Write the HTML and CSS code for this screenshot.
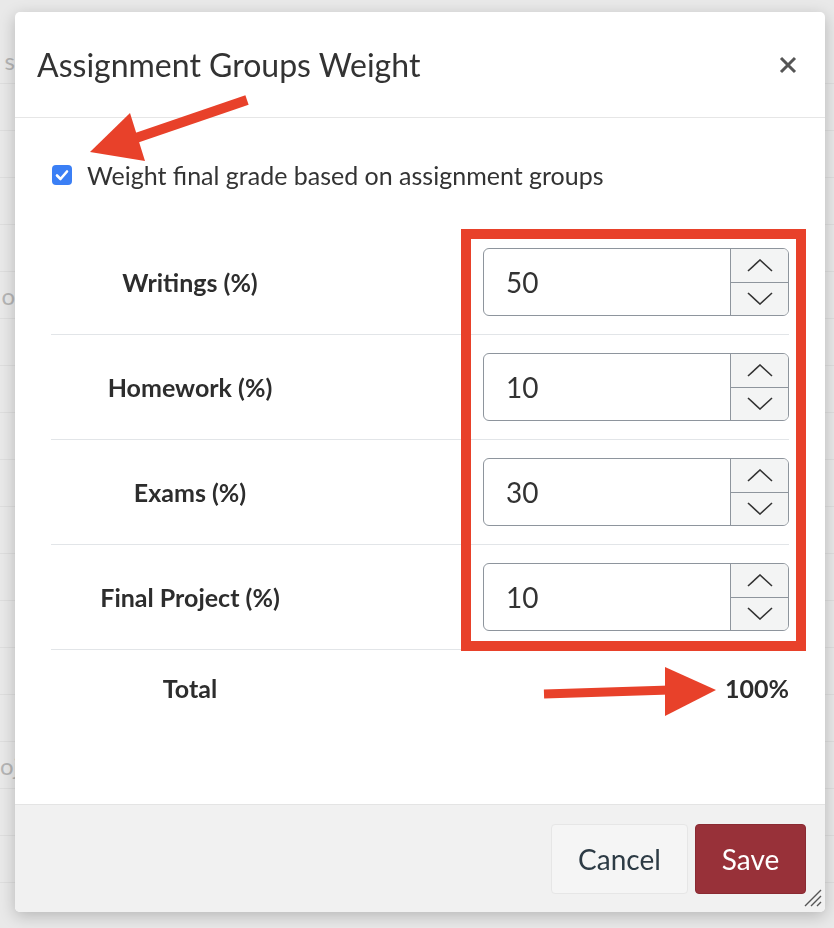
FILE: index.html
```html
<!DOCTYPE html>
<html lang="en">
<head>
  <meta charset="UTF-8">
  <meta name="viewport" content="width=device-width, initial-scale=1.0">
  <title>Assignment Groups Weight</title>
  <link rel="stylesheet" href="styles.css">
</head>
<body>
  <div class="page">
    <div class="line"><span class="l">s</span></div>
    <div class="line"></div>
    <div class="line"></div>
    <div class="line"></div>
    <div class="line"></div>
    <div class="line"><span class="l">o</span></div>
    <div class="line"></div>
    <div class="line"></div>
    <div class="line"></div>
    <div class="line"></div>
    <div class="line"></div>
    <div class="line"></div>
    <div class="line"></div>
    <div class="line"></div>
    <div class="line"></div>
    <div class="line"><span class="l">oj</span></div>
    <div class="line"></div>
    <div class="line"></div>
    <div class="line"></div>
  </div>

  <div class="modal">
    <header class="modal-head">
      <h2>Assignment Groups Weight</h2>
      <button class="close" aria-label="Close">
        <svg width="18" height="18" viewBox="0 0 18 18"><path d="M2 2 L16 16 M16 2 L2 16" stroke="#555" stroke-width="3"/></svg>
      </button>
    </header>

    <div class="modal-body">
      <label class="check">
        <span class="box">
          <svg width="20" height="20" viewBox="0 0 20 20"><path d="M5 10.5 L8.5 14 L15 6.5" fill="none" stroke="#fff" stroke-width="2.6" stroke-linecap="round" stroke-linejoin="round"/></svg>
        </span>
        Weight final grade based on assignment groups
      </label>

      <div class="groups">
        <div class="group">
          <span class="name">Writings (%)</span>
          <div class="num">
            <span class="val">50</span>
            <div class="spin">
              <button><svg width="26" height="13" viewBox="0 0 26 13"><polyline points="1,12 13,1 25,12" fill="none" stroke="#333" stroke-width="1.6"/></svg></button>
              <button><svg width="26" height="13" viewBox="0 0 26 13"><polyline points="1,1 13,12 25,1" fill="none" stroke="#333" stroke-width="1.6"/></svg></button>
            </div>
          </div>
        </div>
        <div class="group">
          <span class="name">Homework (%)</span>
          <div class="num">
            <span class="val">10</span>
            <div class="spin">
              <button><svg width="26" height="13" viewBox="0 0 26 13"><polyline points="1,12 13,1 25,12" fill="none" stroke="#333" stroke-width="1.6"/></svg></button>
              <button><svg width="26" height="13" viewBox="0 0 26 13"><polyline points="1,1 13,12 25,1" fill="none" stroke="#333" stroke-width="1.6"/></svg></button>
            </div>
          </div>
        </div>
        <div class="group">
          <span class="name">Exams (%)</span>
          <div class="num">
            <span class="val">30</span>
            <div class="spin">
              <button><svg width="26" height="13" viewBox="0 0 26 13"><polyline points="1,12 13,1 25,12" fill="none" stroke="#333" stroke-width="1.6"/></svg></button>
              <button><svg width="26" height="13" viewBox="0 0 26 13"><polyline points="1,1 13,12 25,1" fill="none" stroke="#333" stroke-width="1.6"/></svg></button>
            </div>
          </div>
        </div>
        <div class="group">
          <span class="name">Final Project (%)</span>
          <div class="num">
            <span class="val">10</span>
            <div class="spin">
              <button><svg width="26" height="13" viewBox="0 0 26 13"><polyline points="1,12 13,1 25,12" fill="none" stroke="#333" stroke-width="1.6"/></svg></button>
              <button><svg width="26" height="13" viewBox="0 0 26 13"><polyline points="1,1 13,12 25,1" fill="none" stroke="#333" stroke-width="1.6"/></svg></button>
            </div>
          </div>
        </div>
        <div class="group total">
          <span class="name">Total</span>
          <span class="sum">100%</span>
        </div>
      </div>
    </div>

    <footer class="modal-foot">
      <button class="btn btn-cancel">Cancel</button>
      <button class="btn btn-save">Save</button>
    </footer>
    <svg class="grip" width="20" height="20" viewBox="0 0 20 20">
      <path d="M19 3 L3 19 M19 9 L9 19 M19 15 L15 19" stroke="#555" stroke-width="1.4"/>
    </svg>
  </div>

  <svg class="marks" width="834" height="928" viewBox="0 0 834 928">
    <rect x="466" y="234" width="335" height="412" fill="none" stroke="#e8412a" stroke-width="10"/>
    <line x1="136" y1="138" x2="247" y2="100" stroke="#e8412a" stroke-width="10"/>
    <polygon points="90,152 130,113 145,161" fill="#e8412a"/>
    <line x1="544" y1="694" x2="670" y2="690" stroke="#e8412a" stroke-width="9"/>
    <polygon points="665,667 716,690 665,716" fill="#e8412a"/>
  </svg>
</body>
</html>
```

FILE: styles.css
```css
* {
  box-sizing: border-box;
}
body {
  margin: 0;
  width: 834px;
  height: 928px;
  overflow: hidden;
  background: #e9e9e9;
  font-family: Lato, "Open Sans", sans-serif;
  color: #333;
}
.page {
  padding-top: 37px;
}
.line {
  display: flex;
  align-items: center;
  height: 47px;
  border-bottom: 1px solid #dedede;
  font-size: 24px;
  color: #b5b5b5;
}
.line .l {
  width: 15px;
  text-align: right;
}
.modal {
  position: fixed;
  left: 15px;
  top: 12px;
  width: 810px;
  height: 900px;
  display: flex;
  flex-direction: column;
  background: #fff;
  border-radius: 5px;
  box-shadow: 0 4px 16px rgba(0, 0, 0, .22);
  overflow: hidden;
}
.modal-head {
  display: flex;
  align-items: center;
  justify-content: space-between;
  height: 106px;
  padding: 0 28px 0 22px;
  border-bottom: 1px solid #e6e6e6;
  flex-shrink: 0;
}
.modal-head h2 {
  margin: 0;
  font-size: 32px;
  font-weight: 400;
  color: #333;
}
.close {
  display: flex;
  padding: 0;
  border: none;
  background: none;
}
.modal-body {
  flex: 1;
  padding: 37px 36px 0 36px;
}
.check {
  display: flex;
  align-items: center;
  gap: 15px;
  height: 40px;
  font-size: 25px;
  color: #333;
}
.box {
  display: flex;
  width: 20px;
  height: 20px;
  margin-left: 1px;
  border-radius: 4px;
  background: #3b7ff5;
}
.groups {
  margin-top: 35px;
}
.group {
  display: grid;
  grid-template-columns: 278px 1fr;
  align-items: center;
  height: 105px;
  border-bottom: 1px solid #e2e5e8;
}
.name {
  text-align: center;
  font-size: 25px;
  font-weight: 700;
  color: #2d2d2d;
}
.num {
  justify-self: end;
  display: flex;
  width: 306px;
  height: 68px;
  border: 1px solid #8e959d;
  border-radius: 6px;
  overflow: hidden;
}
.val {
  flex: 1;
  display: flex;
  align-items: center;
  padding-left: 22px;
  font-size: 28px;
  color: #333;
}
.spin {
  display: flex;
  flex-direction: column;
  width: 58px;
  border-left: 1px solid #8e959d;
  background: #f3f4f4;
}
.spin button {
  flex: 1;
  display: flex;
  align-items: center;
  justify-content: center;
  padding: 0;
  border: none;
  background: none;
}
.spin button + button {
  border-top: 1px solid #8e959d;
}
.total {
  height: 76px;
  border-bottom: none;
}
.sum {
  justify-self: end;
  font-size: 25px;
  font-weight: 700;
  color: #2d2d2d;
}
.modal-foot {
  display: flex;
  justify-content: flex-end;
  align-items: center;
  gap: 7px;
  height: 108px;
  padding: 0 19px;
  background: #f1f1f1;
  border-top: 1px solid #e4e4e4;
  flex-shrink: 0;
}
.btn {
  height: 70px;
  border-radius: 4px;
  font-family: Lato, "Open Sans", sans-serif;
  font-size: 28px;
  cursor: pointer;
}
.btn-cancel {
  width: 137px;
  background: #f5f5f5;
  border: 1px solid #e6e6e6;
  color: #2d3b45;
}
.btn-save {
  width: 111px;
  background: #983139;
  border: 1px solid #8a2a32;
  color: #fff;
}
.grip {
  position: absolute;
  right: 3px;
  bottom: 5px;
}
.marks {
  position: absolute;
  left: 0;
  top: 0;
  pointer-events: none;
}
```
